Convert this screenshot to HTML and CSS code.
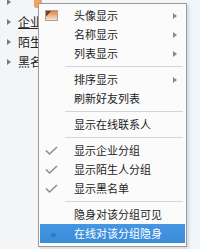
FILE: index.html
```html
<!DOCTYPE html>
<html>
<head>
<meta charset="utf-8">
<link rel="stylesheet" href="styles.css">
</head>
<body>
<div class="page">
  <div class="side">
    <div class="tree">
      <div class="node"><span class="tri"></span><span class="top-ico"></span></div>
      <div class="node"><span class="tri"></span><span class="name hover">企业联系人</span></div>
      <div class="node"><span class="tri"></span><span class="name">陌生人</span></div>
      <div class="node"><span class="tri"></span><span class="name">黑名单</span></div>
    </div>
  </div>
  <div class="rightpane"></div>

  <div class="menu">
    <div class="item"><span class="ico"><span class="avatar"></span></span><span class="label">头像显示</span><span class="arrow"></span></div>
    <div class="item"><span class="ico"></span><span class="label">名称显示</span><span class="arrow"></span></div>
    <div class="item"><span class="ico"></span><span class="label">列表显示</span><span class="arrow"></span></div>
    <div class="sep"></div>
    <div class="item"><span class="ico"></span><span class="label">排序显示</span><span class="arrow"></span></div>
    <div class="item"><span class="ico"></span><span class="label">刷新好友列表</span></div>
    <div class="sep"></div>
    <div class="item"><span class="ico"></span><span class="label">显示在线联系人</span></div>
    <div class="sep"></div>
    <div class="item"><span class="ico"><svg class="chk" width="13" height="10" viewBox="0 0 13 10"><polyline points="1,4.5 4.5,8 12,1" /></svg></span><span class="label">显示企业分组</span></div>
    <div class="item"><span class="ico"><svg class="chk" width="13" height="10" viewBox="0 0 13 10"><polyline points="1,4.5 4.5,8 12,1" /></svg></span><span class="label">显示陌生人分组</span></div>
    <div class="item"><span class="ico"><svg class="chk" width="13" height="10" viewBox="0 0 13 10"><polyline points="1,4.5 4.5,8 12,1" /></svg></span><span class="label">显示黑名单</span></div>
    <div class="sep"></div>
    <div class="item"><span class="ico"></span><span class="label">隐身对该分组可见</span></div>
    <div class="item active"><span class="ico"><span class="dot"></span></span><span class="label">在线对该分组隐身</span></div>
  </div>
</div>
</body>
</html>
```
FILE: styles.css
```css
html, body {
  margin: 0;
  padding: 0;
}
body {
  font-family: "Noto Sans CJK SC", "Microsoft YaHei", sans-serif;
  font-size: 12px;
  color: #1d1d1d;
}
.page {
  position: relative;
  width: 200px;
  height: 249px;
  overflow: hidden;
  display: flex;
  background: #f4f5f7;
}
.side {
  width: 185px;
  flex: none;
}
.rightpane {
  flex: 1;
  background: #f1f6fb;
}
.tree {
  margin-top: -8px;
}
.node {
  height: 20px;
  display: flex;
  align-items: center;
  white-space: nowrap;
}
.tri {
  width: 0;
  height: 0;
  border-style: solid;
  border-width: 3.5px 0 3.5px 4px;
  border-color: transparent transparent transparent #7b7b7b;
  margin-left: 7px;
  margin-right: 7px;
}
.top-ico {
  width: 8px;
  height: 12px;
  margin-left: 16px;
  background: #f0a35c;
  border-radius: 2px;
}
.name {
  line-height: 20px;
  color: #222;
}
.name.hover {
  text-decoration: underline;
}

.menu {
  position: absolute;
  left: 38px;
  top: 3px;
  width: 145px;
  padding: 2px 1px 3px;
  border: 1px solid #9c9c9c;
  background: #fbfbfb;
  box-shadow: 2px 2px 3px rgba(0, 0, 0, 0.12);
  font-size: 11px;
}
.item {
  height: 19px;
  display: flex;
  align-items: center;
  white-space: nowrap;
}
.ico {
  width: 24px;
  height: 19px;
  flex: none;
  display: flex;
  align-items: center;
  padding-left: 5px;
  box-sizing: border-box;
}
.avatar {
  width: 11px;
  height: 9px;
  border: 1px solid #a3a3a3;
  background:
    linear-gradient(135deg, #7a4124 0, #7a4124 28%, transparent 29%),
    linear-gradient(#e6813f, #f4b589 55%, #fbe6d5);
}
.chk polyline {
  fill: none;
  stroke: #8d8d8d;
  stroke-width: 1.6;
}
.label {
  margin-left: 10px;
  line-height: 19px;
}
.arrow {
  margin-left: auto;
  margin-right: 8px;
  width: 0;
  height: 0;
  border-style: solid;
  border-width: 3.5px 0 3.5px 4px;
  border-color: transparent transparent transparent #8a8a8a;
}
.sep {
  height: 7px;
  margin-left: 25px;
  margin-right: 2px;
  background: linear-gradient(#d5d5d5, #d5d5d5) center / 100% 1px no-repeat;
}
.item.active {
  background: linear-gradient(#4496e2, #3a8cdb);
  color: #ffffff;
}
.dot {
  width: 5px;
  height: 4px;
  margin-left: 6px;
  margin-top: 3px;
  border-radius: 2px;
  background: #3479bd;
}
```
